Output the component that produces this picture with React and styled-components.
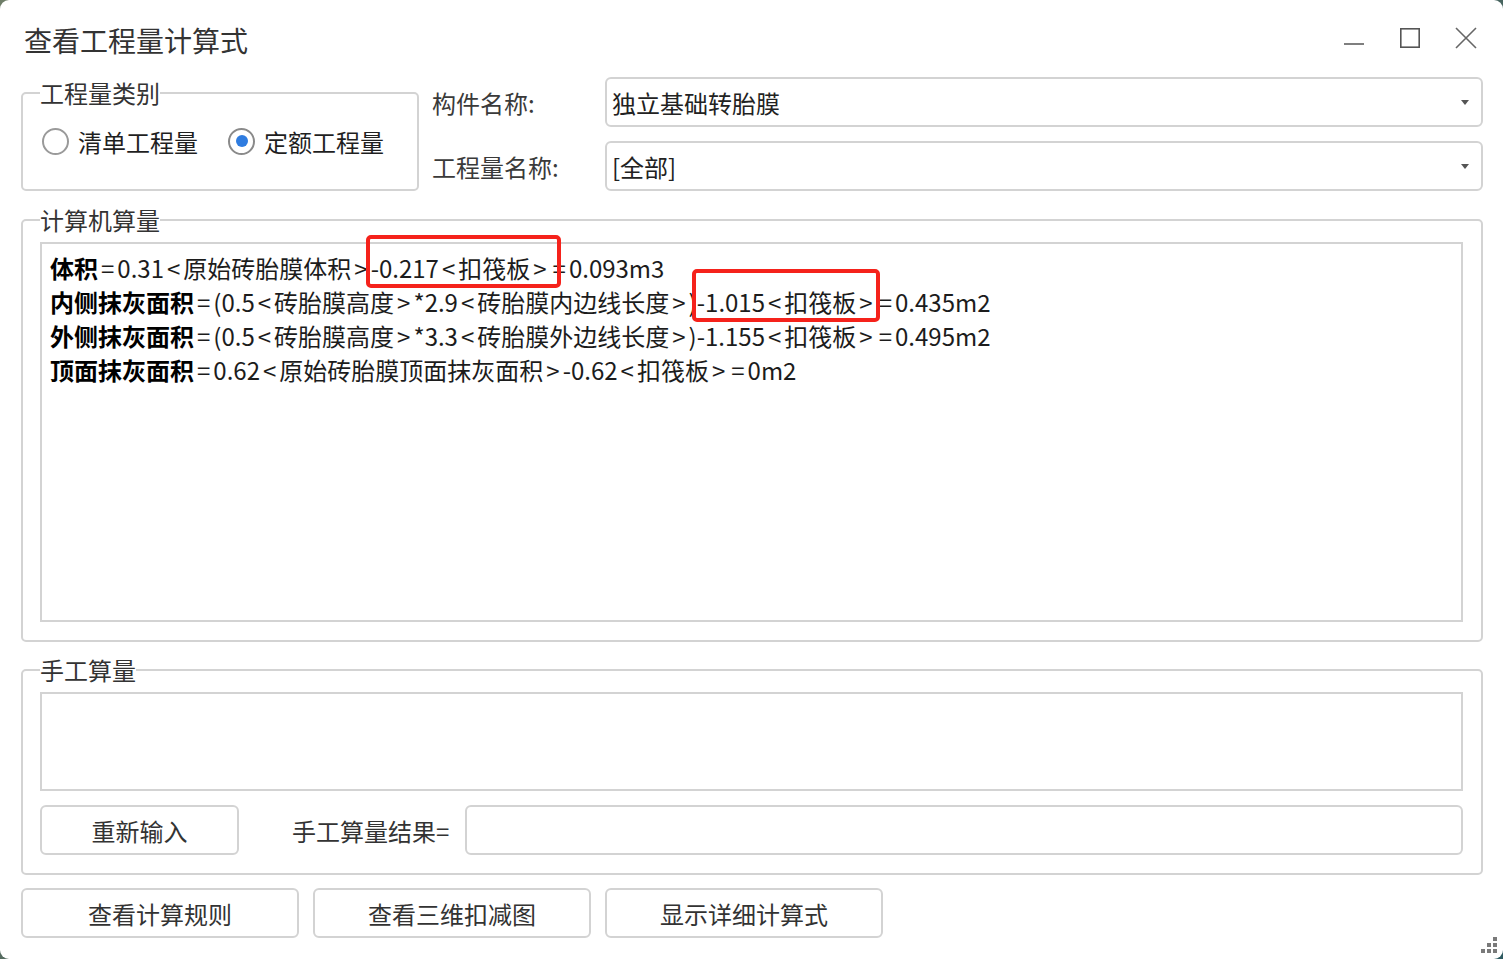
import styled, { createGlobalStyle } from "styled-components";

const GlobalStyle = createGlobalStyle`
  html, body {
    margin: 0;
    padding: 0;
  }
  body {
    background: linear-gradient(135deg, #6f7e68 0%, #52695f 45%, #2d5a60 100%);
    font-family: "Noto Sans CJK SC", "Noto Sans", sans-serif;
    color: #262626;
  }
`;

const Window = styled.div`
  position: relative;
  width: 1503px;
  height: 959px;
  box-sizing: border-box;
  background: #fff;
  border-radius: 9px;
  display: flex;
  flex-direction: column;
  padding: 0 20px 0 21px;
  overflow: hidden;
`;

const TitleBar = styled.div`
  height: 77px;
  flex: none;
  display: flex;
  justify-content: space-between;
  align-items: flex-start;
`;

const Title = styled.div`
  margin-top: 21px;
  padding-left: 3px;
  font-size: 28px;
  line-height: 38px;
  color: #333;
`;

const Controls = styled.div`
  display: flex;
  margin-top: 18px;
  margin-right: -11px;
`;

const ControlButton = styled.div`
  width: 56px;
  height: 40px;
  display: flex;
  align-items: center;
  justify-content: center;
`;

const TopRow = styled.div`
  display: flex;
  gap: 13px;
  height: 114px;
  flex: none;
`;

const Group = styled.fieldset`
  margin: 0;
  margin-top: ${(p) => p.$top || 0}px;
  box-sizing: border-box;
  min-width: 0;
  border: 2px solid #d3d3d3;
  border-radius: 5px;
  padding: 0 18px ${(p) => p.$bottom || 0}px 17px;
  width: ${(p) => p.$width || "auto"};
  flex: none;
`;

const Legend = styled.legend`
  font-size: 24px;
  line-height: 26px;
  padding: 0;
  color: #333;
`;

const RadioRow = styled.div`
  display: flex;
  align-items: center;
  gap: 30px;
  margin-top: 20px;
  padding-left: 2px;
  height: 30px;
`;

const RadioItem = styled.label`
  display: flex;
  align-items: center;
  gap: 9px;
  font-size: 24px;
  color: #1f1f1f;
`;

const RadioCircle = styled.span`
  width: 27px;
  height: 27px;
  box-sizing: border-box;
  border-radius: 50%;
  border: 2px solid ${(p) => (p.$checked ? "#8a8a8a" : "#9a9a9a")};
  display: flex;
  align-items: center;
  justify-content: center;
  &::after {
    content: "";
    width: 12px;
    height: 12px;
    border-radius: 50%;
    background: ${(p) => (p.$checked ? "#2f7ce0" : "transparent")};
  }
`;

const FieldGrid = styled.div`
  flex: 1;
  display: grid;
  grid-template-columns: 173px 1fr;
  grid-auto-rows: 50px;
  row-gap: 14px;
  align-items: center;
`;

const FieldLabel = styled.div`
  font-size: 24px;
  color: #3a3a3a;
`;

const Select = styled.div`
  height: 50px;
  box-sizing: border-box;
  border: 2px solid #d3d3d3;
  border-radius: 6px;
  display: flex;
  align-items: center;
  justify-content: space-between;
  padding: 0 12px 0 5px;
  font-size: 24px;
  color: #222;
  &::after {
    content: "";
    border-left: 4px solid transparent;
    border-right: 4px solid transparent;
    border-top: 5px solid #555;
  }
`;

const Box = styled.div`
  box-sizing: border-box;
  height: ${(p) => p.$height}px;
  border: 2px solid #d3d3d3;
  margin-top: 9px;
  padding: 7px 8px;
  font-size: 24px;
  line-height: 34px;
  color: #1c1c1c;
`;

const Line = styled.div`
  white-space: nowrap;
`;

const Key = styled.b`
  font-weight: 700;
  color: #000;
`;

const Sym = styled.span`
  padding: 0 3px;
`;

const Marked = styled.span`
  position: relative;
  display: inline-block;
  &::after {
    content: "";
    position: absolute;
    left: -5px;
    right: -${(p) => p.$extra}px;
    top: -16px;
    bottom: -3px;
    border: 4px solid #f5221b;
    border-radius: 5px;
  }
`;

const ManualRow = styled.div`
  display: flex;
  align-items: center;
  margin-top: 14px;
  height: 50px;
`;

const Button = styled.div`
  box-sizing: border-box;
  width: ${(p) => p.$width}px;
  height: 50px;
  flex: none;
  border: 2px solid #d3d3d3;
  border-radius: 6px;
  display: flex;
  align-items: center;
  justify-content: center;
  font-size: 24px;
  color: #333;
`;

const ResultLabel = styled.div`
  margin-left: 53px;
  width: 173px;
  font-size: 24px;
  color: #333;
`;

const ResultInput = styled.div`
  flex: 1;
  height: 50px;
  box-sizing: border-box;
  border: 2px solid #d3d3d3;
  border-radius: 6px;
`;

const BottomBar = styled.div`
  display: flex;
  gap: 14px;
  margin-top: 13px;
`;

const Grip = styled.div`
  position: absolute;
  right: 6px;
  bottom: 6px;
  width: 16px;
  height: 16px;
  display: grid;
  grid-template-columns: repeat(3, 4px);
  grid-template-rows: repeat(3, 4px);
  gap: 2px;
  span {
    background: #7a7a7a;
  }
`;

const fmt = (s) =>
  s.split(/([<>=])/).map((part, i) =>
    part === "<" || part === ">" || part === "=" ? <Sym key={i}>{part}</Sym> : part
  );

export default function App() {
  return (
    <>
      <GlobalStyle />
      <Window>
        <TitleBar>
          <Title>查看工程量计算式</Title>
          <Controls>
            <ControlButton>
              <svg width="20" height="20" viewBox="0 0 20 20">
                <line x1="0" y1="16" x2="20" y2="16" stroke="#555" strokeWidth="1.6" />
              </svg>
            </ControlButton>
            <ControlButton>
              <svg width="20" height="20" viewBox="0 0 20 20">
                <rect x="0.8" y="0.8" width="18.4" height="18.4" fill="none" stroke="#555" strokeWidth="1.6" />
              </svg>
            </ControlButton>
            <ControlButton>
              <svg width="22" height="22" viewBox="0 0 22 22">
                <path d="M1 1 L21 21 M21 1 L1 21" stroke="#666" strokeWidth="1.6" fill="none" />
              </svg>
            </ControlButton>
          </Controls>
        </TitleBar>

        <TopRow>
          <Group $width="398px" $top={3}>
            <Legend>工程量类别</Legend>
            <RadioRow>
              <RadioItem>
                <RadioCircle />
                清单工程量
              </RadioItem>
              <RadioItem>
                <RadioCircle $checked />
                定额工程量
              </RadioItem>
            </RadioRow>
          </Group>
          <FieldGrid>
            <FieldLabel>构件名称:</FieldLabel>
            <Select>独立基础转胎膜</Select>
            <FieldLabel>工程量名称:</FieldLabel>
            <Select>[全部]</Select>
          </FieldGrid>
        </TopRow>

        <Group $top={16} $bottom={18}>
          <Legend>计算机算量</Legend>
          <Box $height={380}>
            <Line>
              <Key>体积</Key>
              {fmt("=0.31<原始砖胎膜体积>")}
              <Marked $extra={11}>{fmt("-0.217<扣筏板>")}</Marked>
              {fmt("=0.093m3")}
            </Line>
            <Line>
              <Key>内侧抹灰面积</Key>
              {fmt("=(0.5<砖胎膜高度>*2.9<砖胎膜内边线长度>)")}
              <Marked $extra={4}>{fmt("-1.015<扣筏板>")}</Marked>
              {fmt("=0.435m2")}
            </Line>
            <Line>
              <Key>外侧抹灰面积</Key>
              {fmt("=(0.5<砖胎膜高度>*3.3<砖胎膜外边线长度>)-1.155<扣筏板>=0.495m2")}
            </Line>
            <Line>
              <Key>顶面抹灰面积</Key>
              {fmt("=0.62<原始砖胎膜顶面抹灰面积>-0.62<扣筏板>=0m2")}
            </Line>
          </Box>
        </Group>

        <Group $top={15} $bottom={18}>
          <Legend>手工算量</Legend>
          <Box $height={99} />
          <ManualRow>
            <Button $width={199}>重新输入</Button>
            <ResultLabel>手工算量结果=</ResultLabel>
            <ResultInput />
          </ManualRow>
        </Group>

        <BottomBar>
          <Button $width={278}>查看计算规则</Button>
          <Button $width={278}>查看三维扣减图</Button>
          <Button $width={278}>显示详细计算式</Button>
        </BottomBar>

        <Grip>
          <i />
          <i />
          <span />
          <i />
          <span />
          <span />
          <span />
          <span />
          <span />
        </Grip>
      </Window>
    </>
  );
}
